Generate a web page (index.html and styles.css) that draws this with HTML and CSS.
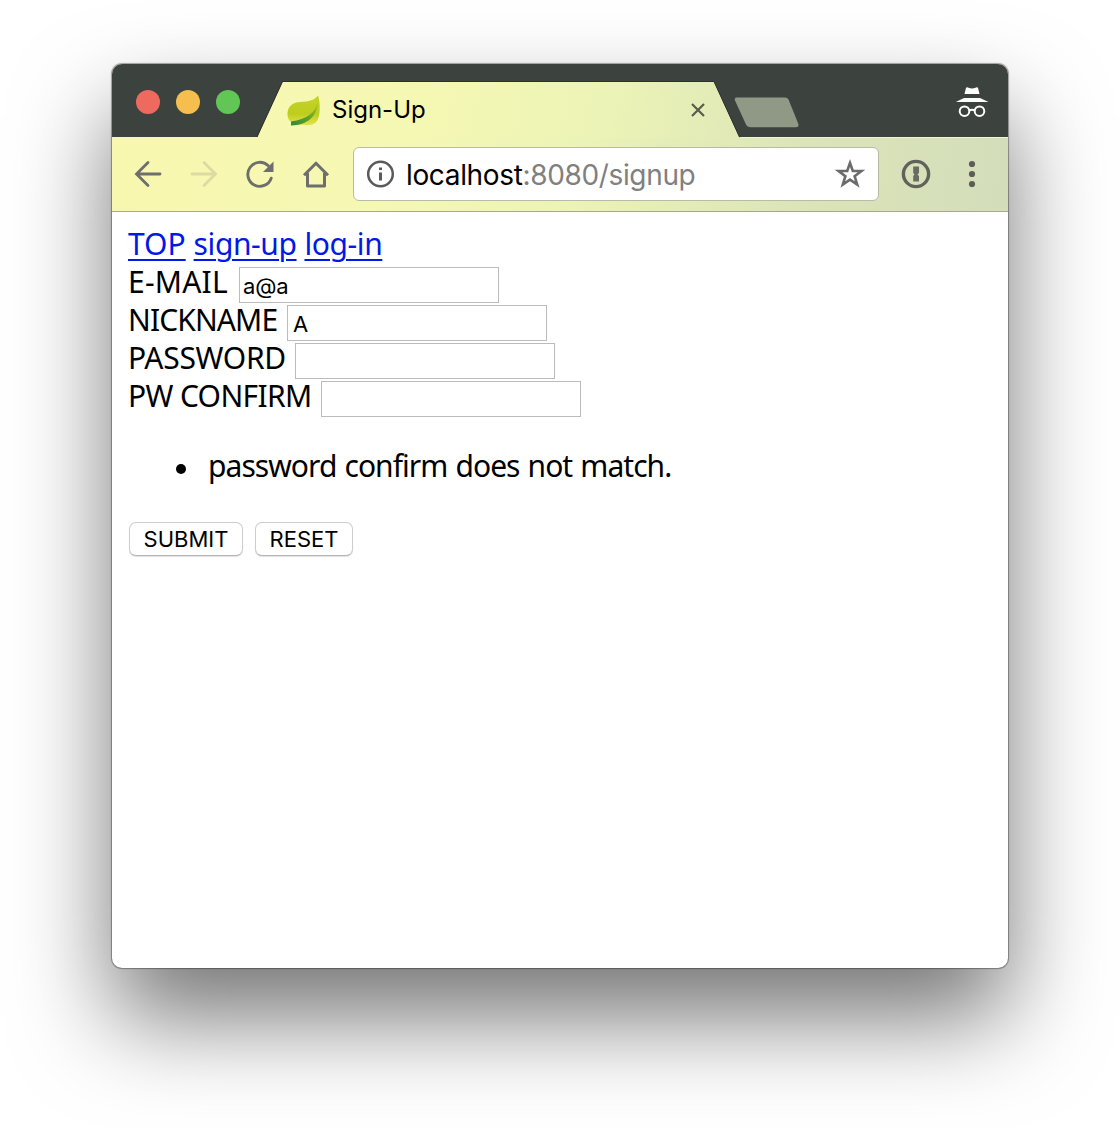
FILE: index.html
```
<!DOCTYPE html>
<html lang="en">
<head>
<meta charset="utf-8">
<title>Sign-Up</title>
<link rel="stylesheet" href="styles.css">
</head>
<body>
<div class="window">
  <div class="tabstrip">
    <div class="lights"><i class="light red"></i><i class="light yellow"></i><i class="light green"></i></div>
    <svg class="strip-art" width="896" height="74" viewBox="0 0 896 74">
      <defs>
        <linearGradient id="theme" gradientUnits="userSpaceOnUse" x1="0" y1="0" x2="896" y2="148">
          <stop offset="0" stop-color="#f8f7b0"/><stop offset=".35" stop-color="#f5f8b3"/><stop offset=".55" stop-color="#ebf3b6"/><stop offset=".72" stop-color="#dfe8b8"/><stop offset="1" stop-color="#d3ddba"/>
        </linearGradient>
      </defs>
      <path d="M145 73.500L170.500 18H602L627.500 73.500V74H145z" fill="url(#theme)"/>
      <path d="M145 73L170.500 17.500H602L627.500 73" fill="none" stroke="#2c302c" stroke-width="1"/>
      <path d="M0 73.500H145M627.500 73.500H896" stroke="#f1f4d4"/>
      <path d="M625 33.500H673C675 33.500 676 34.500 676.800 36.200L686.200 59.500C687 62 686 63.300 684 63.300H638.500C636.500 63.300 635 62.300 634 60.500L623 36.500C622.300 34.500 623 33.500 625 33.500z" fill="#909886"/>
    </svg>
    <div class="tab">
      <svg class="leaf" width="34" height="34" viewBox="0 0 34 34">
        <defs>
          <linearGradient id="lf" x1="0" y1="0" x2="0" y2="1"><stop offset="0" stop-color="#c5d426"/><stop offset=".6" stop-color="#bccd1e"/><stop offset="1" stop-color="#e6e34a"/></linearGradient>
          <linearGradient id="vein" x1="0" y1="1" x2="1" y2="0"><stop offset="0" stop-color="#2f8a35"/><stop offset=".5" stop-color="#5fa02c"/><stop offset="1" stop-color="#a8c522"/></linearGradient>
        </defs>
        <path d="M.500 21C0 13 5 8.500 13 8C22 7.500 28 6 31 1.500C33 7 33.200 16 32 22C30.500 29.500 25 32 17 31C12 30.300 8 31 4 31.500L4.500 28C2 27 .700 24 .500 21z" fill="url(#lf)"/>
        <path d="M30.500 9C28 19 20 25 4 27.500L4 31.500C20 31 30 23 30.500 9z" fill="url(#vein)"/>
      </svg>
      <span class="tab-title">Sign-Up</span>
      <svg class="close" width="14" height="14" viewBox="0 0 14 14"><path d="M1 1L13 13M13 1L1 13" stroke="#5a5c4b" stroke-width="2.200"/></svg>
    </div>
    <svg class="incognito" width="34" height="34" viewBox="0 0 34 34">
      <path d="M11 1.800Q12 .800 13.500 1.800Q17 3 20.500 1.800Q22 .800 23 1.800L24.500 8H9.500z" fill="#fff"/>
      <path d="M9 12H25L33.500 16H.800z" fill="#fff"/>
      <g fill="none" stroke="#fff" stroke-width="2"><circle cx="9.500" cy="25.200" r="4.800"/><circle cx="24.500" cy="25.200" r="4.800"/><path d="M14 24.500Q17 23 20 24.500"/></g>
    </svg>
  </div>
  <div class="toolbar">
    <svg class="nav" width="28" height="28" viewBox="0 0 28 28"><path d="M26 14H3M14 2.500L2.500 14L14 25.500" stroke="#6d6e6d" stroke-width="2.800" stroke-linecap="round" fill="none"/></svg>
    <svg class="nav" width="28" height="28" viewBox="0 0 28 28"><path d="M2 14H25M14 2.500L25.500 14L14 25.500" stroke="#dcdba4" stroke-width="2.800" stroke-linecap="round" fill="none"/></svg>
    <svg class="nav" width="28" height="28" viewBox="0 0 28 28"><path d="M25.200 18.200A12 12 0 1 1 22.300 5.800" stroke="#6d6e6d" stroke-width="2.900" stroke-linecap="round" fill="none"/><path d="M27.500 1.500V12H17z" fill="#6d6e6d"/></svg>
    <svg class="nav" width="28" height="28" viewBox="0 0 28 28"><path d="M2 15.200L14 3.200L26 15.200M5.500 13V26H22.500V13" stroke="#6d6e6d" stroke-width="3" stroke-linejoin="round" fill="none"/></svg>
    <div class="address">
      <svg width="28" height="28" viewBox="0 0 28 28"><circle cx="13.500" cy="14" r="12.300" fill="none" stroke="#5a5a5a" stroke-width="2.500"/><path d="M12 7.500H15V10H12zM12 12.500H15V20.500H12z" fill="#5a5a5a"/></svg>
      <span class="url">localhost<span class="path">:8080/signup</span></span>
      <svg width="30" height="30" viewBox="0 0 30 30"><path d="M15 4L17.800 12H26.500L19.600 17.200L22.200 25.600L15 20.600L7.800 25.600L10.400 17.200L3.500 12H12.200z" fill="none" stroke="#6b6b6b" stroke-width="2.600"/></svg>
    </div>
    <svg class="onepw" width="30" height="30" viewBox="0 0 30 30"><circle cx="15" cy="15" r="12.600" fill="none" stroke="#60635c" stroke-width="3.400"/><path d="M12.200 7.500H18V14L16.500 15.500L18 17V22.500H12.200V17L13.500 15.500L12.200 14z" fill="#686c63"/></svg>
    <svg class="menu" width="8" height="28" viewBox="0 0 8 28"><g fill="#5c5d59"><circle cx="4" cy="4" r="3.100"/><circle cx="4" cy="14" r="3.100"/><circle cx="4" cy="24" r="3.100"/></g></svg>
  </div>
  <div class="page">
    <nav class="links"><a class="top" href="#">TOP</a> <a href="#">sign-up</a> <a href="#">log-in</a></nav>
    <form>
      <div class="row"><label class="label email" for="email">E-MAIL</label><input id="email" class="field" type="text" value="a@a"></div>
      <div class="row"><label class="label nick" for="nick">NICKNAME</label><input id="nick" class="field" type="text" value="A"></div>
      <div class="row"><label class="label pass" for="pass">PASSWORD</label><input id="pass" class="field" type="password"></div>
      <div class="row"><label class="label confirm" for="confirm">PW CONFIRM</label><input id="confirm" class="field" type="password"></div>
      <ul class="errors"><li>password confirm does not match.</li></ul>
      <div class="buttons"><button class="btn submit" type="button">SUBMIT</button><button class="btn reset" type="button">RESET</button></div>
    </form>
  </div>
</div>
</body>
</html>
```
FILE: styles.css
```
* { box-sizing: border-box; }
html, body { margin: 0; height: 1128px; overflow: hidden; background: #fff; }
body { padding: 64px 112px; font-family: Inter, "Liberation Sans", sans-serif; color: #000; }
svg { display: block; flex: none; }

.window {
  width: 896px;
  height: 904px;
  border-radius: 10px;
  background: #fff;
  box-shadow: 0 0 1px 1px rgba(0, 0, 0, .35), 0 50px 96px rgba(0, 0, 0, .54);
}

.tabstrip {
  position: relative;
  display: flex;
  align-items: flex-start;
  height: 74px;
  background: #3c433e;
  border-radius: 10px 10px 0 0;
}
.strip-art { position: absolute; left: 0; top: 0; }
.lights { display: flex; gap: 16px; width: 145px; padding: 26px 0 0 24px; }
.light { width: 24px; height: 24px; border-radius: 50%; flex: none; }
.red { background: #ee6a5f; }
.yellow { background: #f5be4f; }
.green { background: #62c656; }
.tab { position: relative; display: flex; width: 483px; height: 56px; margin-top: 18px; padding-left: 30px; }
.leaf { margin-top: 12px; }
.tab-title { width: 358px; margin-left: 11px; font-size: 24px; line-height: 56px; }
.close { margin-top: 21px; margin-left: 1px; }
.incognito { position: relative; margin: 22px 19px 0 auto; }

.toolbar {
  display: flex;
  align-items: center;
  height: 74px;
  padding: 0 0 2px 22px;
  border-bottom: 1px solid #a5ab88;
  background: linear-gradient(99deg, #f8f7b0 0%, #f5f8b3 32%, #ebf3b6 52%, #dce5b8 76%, #d3ddba 100%);
}
.nav { margin-right: 28px; }
.address {
  display: flex;
  align-items: center;
  width: 526px;
  height: 54px;
  margin-left: -5px;
  padding: 0 13px;
  border: 1px solid #b8bba6;
  border-radius: 6px;
  background: #fff;
}
.url { flex: 1; padding-top: 2px; margin-left: 11px; font-size: 28px; line-height: 50px; letter-spacing: -.35px; white-space: nowrap; }
.path { color: #808080; }
.onepw { margin-left: 22px; }
.menu { margin-left: 37px; }

.page { padding: 13px 16px; font-family: "Noto Sans", sans-serif; font-size: 30px; line-height: 38px; }
.links { height: 38px; letter-spacing: -.4px; word-spacing: .5px; white-space: nowrap; }
.links a { color: #0019e6; text-decoration-thickness: 2px; text-underline-offset: 4px; }
.links .top { letter-spacing: 0; }
.row { display: flex; height: 38px; }
.label { flex: none; white-space: nowrap; }
.email { width: 111px; letter-spacing: .2px; }
.nick { width: 159px; letter-spacing: -.9px; }
.pass { width: 167px; letter-spacing: -.3px; }
.confirm { width: 193px; letter-spacing: -.65px; }
.field {
  width: 260px;
  height: 36px;
  margin: 4px 0 0;
  padding: 2px 4px 0 3px;
  border: 1px solid #bcbcbc;
  outline: 0;
  background: #fff;
  font: 22px Inter, sans-serif;
  letter-spacing: -.2px;
  color: #000;
}
.nick + .field { padding-left: 5px; }
.errors { margin: 32px 0; padding-left: 48px; list-style: none; letter-spacing: -.95px; word-spacing: 1.2px; white-space: nowrap; }
.errors li { display: flex; align-items: center; gap: 22px; }
.errors li::before { content: ""; width: 10px; height: 10px; margin-top: 6px; border-radius: 50%; background: #000; }
.buttons { display: flex; gap: 12px; padding: 5px 0 0 1px; }
.btn {
  height: 34px;
  padding: 0;
  border: 1px solid #cdcdcd;
  border-bottom-color: #b5b5b5;
  border-radius: 7px;
  background: #fff;
  box-shadow: 0 1px 1px rgba(0, 0, 0, .12);
  font: 22px Inter, sans-serif;
  color: #000;
}
.submit { width: 114px; }
.reset { width: 98px; }
```
